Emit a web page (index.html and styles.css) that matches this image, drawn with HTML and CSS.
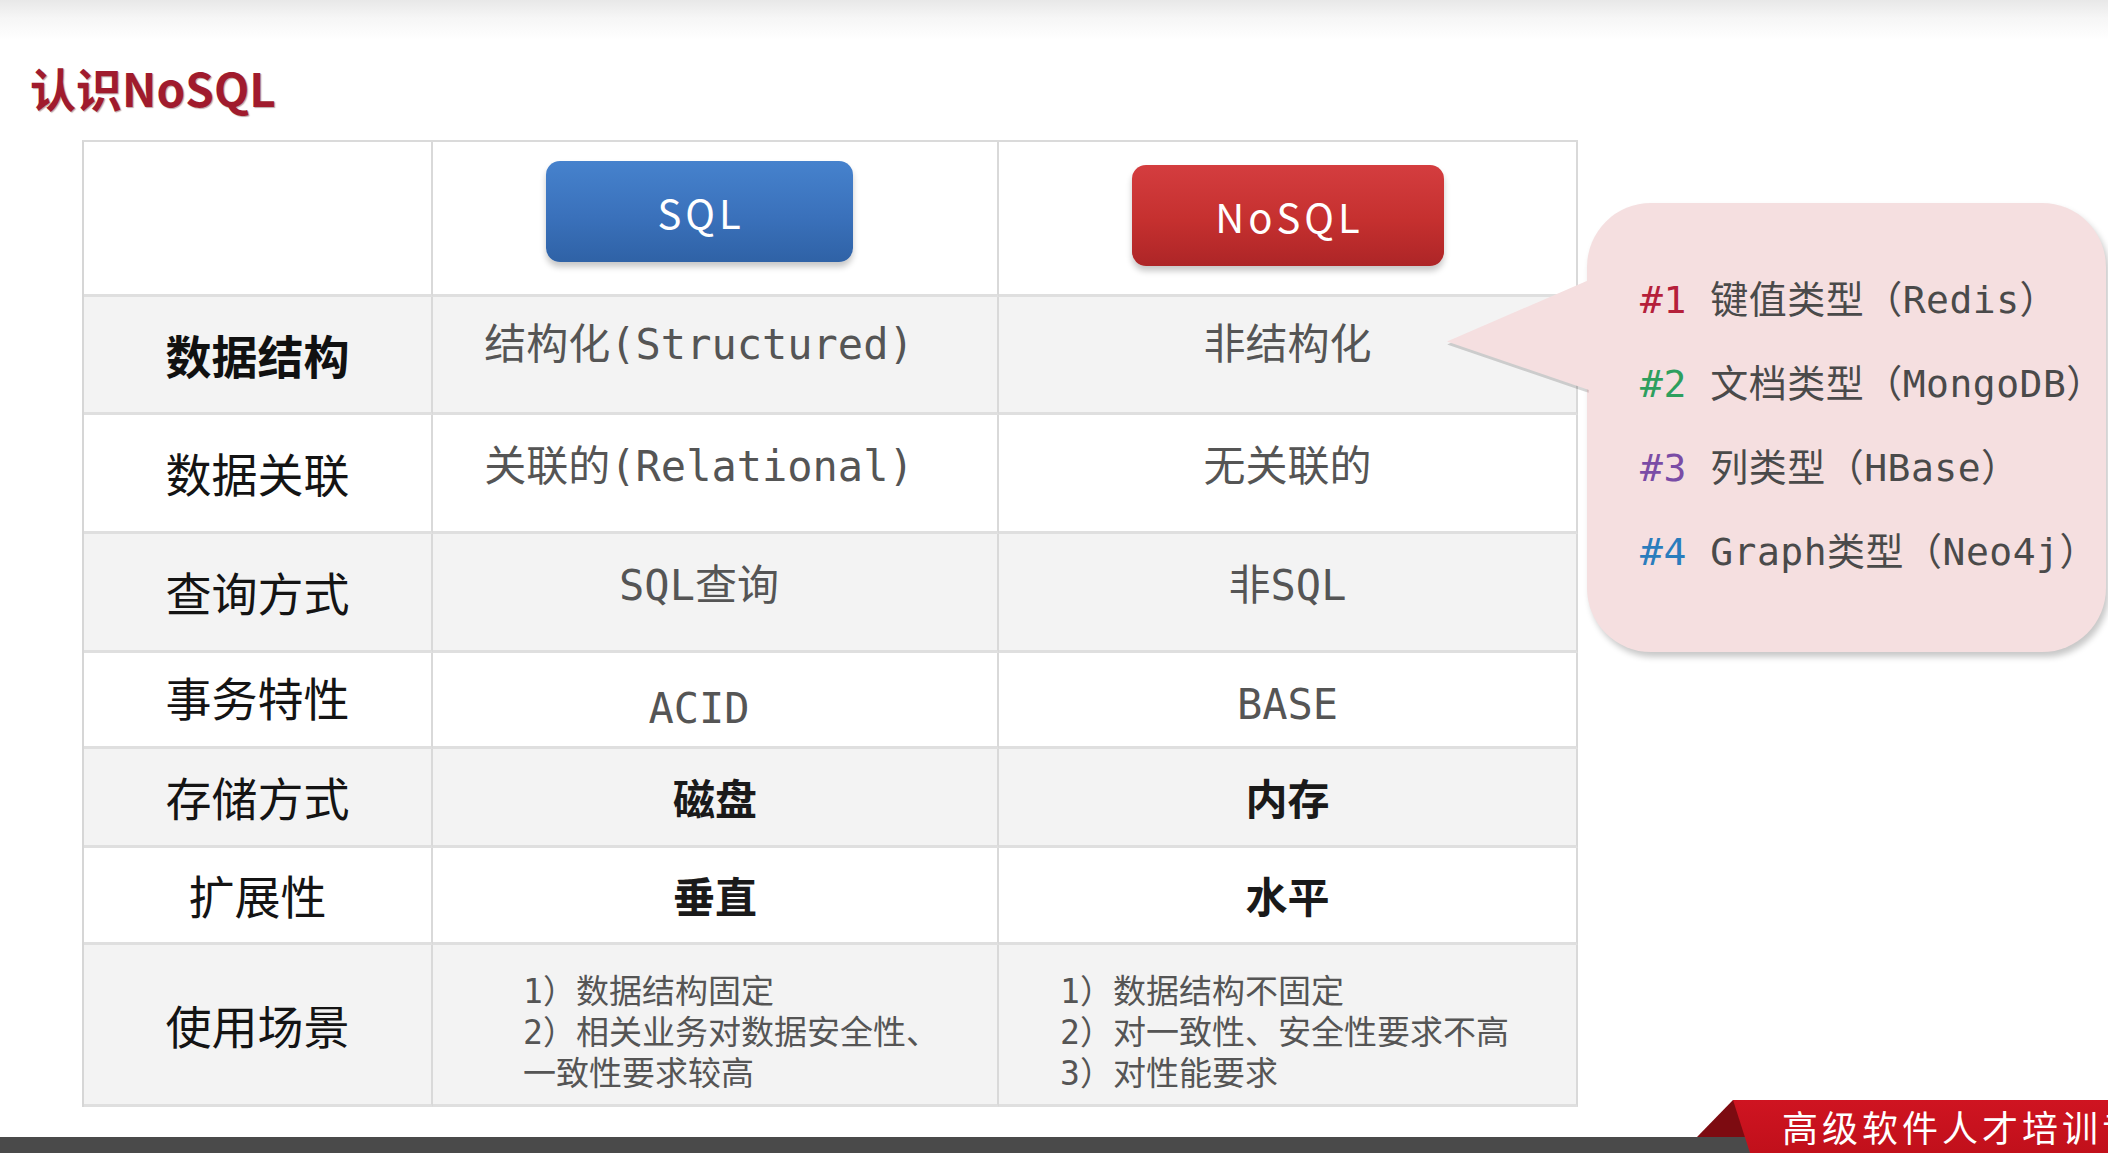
FILE: index.html
```html
<!DOCTYPE html>
<html lang="zh-CN">
<head>
<meta charset="utf-8">
<title>认识NoSQL</title>
<link rel="stylesheet" href="styles.css">
</head>
<body>
<div class="slide">
  <h1 class="title">认识NoSQL</h1>
  <div class="content">
    <div class="compare">
      <div class="cell head"></div>
      <div class="cell head head-sql"><span class="btn btn-sql">SQL</span></div>
      <div class="cell head head-nosql"><span class="btn btn-nosql">NoSQL</span></div>

      <div class="cell gray label strong">数据结构</div>
      <div class="cell gray val sql-col up9">结构化(Structured)</div>
      <div class="cell gray val up9">非结构化</div>

      <div class="cell label">数据关联</div>
      <div class="cell val sql-col up6">关联的(Relational)</div>
      <div class="cell val up6">无关联的</div>

      <div class="cell gray label">查询方式</div>
      <div class="cell gray val sql-col up6">SQL查询</div>
      <div class="cell gray val up6">非SQL</div>

      <div class="cell label up3">事务特性</div>
      <div class="cell val sql-col down10">ACID</div>
      <div class="cell val down6">BASE</div>

      <div class="cell gray label">存储方式</div>
      <div class="cell gray bold">磁盘</div>
      <div class="cell gray bold">内存</div>

      <div class="cell label">扩展性</div>
      <div class="cell bold">垂直</div>
      <div class="cell bold">水平</div>

      <div class="cell gray label">使用场景</div>
      <div class="cell gray use-left">
        <div class="uses">
          <div>1）数据结构固定</div>
          <div>2）相关业务对数据安全性、</div>
          <div>一致性要求较高</div>
        </div>
      </div>
      <div class="cell gray use-right">
        <div class="uses">
          <div>1）数据结构不固定</div>
          <div>2）对一致性、安全性要求不高</div>
          <div>3）对性能要求</div>
        </div>
      </div>
    </div>

    <div class="bubble">
      <div class="item"><span class="n1">#1</span> 键值类型（Redis）</div>
      <div class="item"><span class="n2">#2</span> 文档类型（MongoDB）</div>
      <div class="item"><span class="n3">#3</span> 列类型（HBase）</div>
      <div class="item"><span class="n4">#4</span> Graph类型（Neo4j）</div>
    </div>
  </div>

  <footer class="footer">
    <div class="bar"></div>
    <div class="ribbon">
      <div class="fold"></div>
      <div class="band">高级软件人才培训专家</div>
    </div>
  </footer>
</div>
</body>
</html>
```
FILE: styles.css
```css
* { box-sizing: border-box; }

html, body {
  margin: 0;
  padding: 0;
}

body {
  width: 2108px;
  height: 1153px;
  overflow: hidden;
  background: linear-gradient(#e8e8e8 0, #f6f6f6 18px, #ffffff 40px);
  font-family: "Noto Sans CJK SC", "Noto Sans", sans-serif;
}

.slide {
  padding-top: 64px;
}

.title {
  margin: 0 0 0 30px;
  font-size: 46px;
  line-height: 46px;
  font-weight: 700;
  color: #a01b2d;
  text-shadow: 1px 1px 1px rgba(70, 0, 0, 0.35);
}

.content {
  position: relative;
  margin-top: 30px;
}

/* comparison table */
.compare {
  display: grid;
  width: 1496px;
  margin-left: 82px;
  grid-template-columns: 349px 566px 579px;
  grid-template-rows: 155px 118px 119px 119px 96px 99px 97px 162px;
  border-top: 2px solid #dadada;
  border-left: 2px solid #d6d6d6;
}

.cell {
  display: flex;
  align-items: center;
  justify-content: center;
  background: #ffffff;
  border-right: 2px solid #d9d9d9;
  border-bottom: 3px solid #dfdfdf;
  line-height: 1.2;
}

.gray { background: #f3f3f3; }

.label {
  font-size: 46px;
  font-weight: 400;
  color: #141414;
}

.label.strong { font-weight: 700; color: #111; }

.val {
  font-family: "DejaVu Sans Mono", "Noto Sans CJK SC", monospace;
  font-size: 42px;
  color: #555555;
}

.sql-col { padding-right: 32px; }

.bold {
  font-size: 42px;
  font-weight: 700;
  color: #1a1a1a;
}

.up9 { padding-bottom: 18px; }
.up6 { padding-bottom: 12px; }
.up3 { padding-bottom: 6px; }
.down10 { padding-top: 20px; }
.down6 { padding-top: 12px; }

.uses {
  font-family: "DejaVu Sans Mono", "Noto Sans CJK SC", monospace;
  font-size: 33px;
  line-height: 41px;
  color: #555555;
  text-align: left;
  white-space: nowrap;
}

.use-left { padding-left: 32px; padding-top: 16px; }
.use-right { padding-right: 6px; padding-top: 16px; }

/* header buttons */
.head { align-items: flex-start; }
.head-sql { padding-top: 19px; padding-right: 32px; }
.head-nosql { padding-top: 23px; }

.btn {
  display: flex;
  align-items: center;
  justify-content: center;
  height: 101px;
  border-radius: 14px;
  color: #ffffff;
  font-size: 40px;
  letter-spacing: 4px;
  padding-left: 4px;
  box-shadow: 0 5px 6px rgba(0, 0, 0, 0.22);
}

.btn-sql {
  width: 307px;
  background: linear-gradient(#4682cd, #3a71bb 55%, #2f62a6);
}

.btn-nosql {
  width: 312px;
  background: linear-gradient(#d43d3f, #c5302f 55%, #ad2527);
}

/* callout bubble */
.bubble {
  position: absolute;
  left: 1587px;
  top: 63px;
  width: 519px;
  height: 449px;
  padding: 55px 0 0 53px;
  background: #f5dfe0;
  border-radius: 64px;
  box-shadow: 3px 5px 6px rgba(0, 0, 0, 0.22);
  font-family: "DejaVu Sans Mono", "Noto Sans CJK SC", monospace;
  font-size: 38px;
  letter-spacing: 0.5px;
  color: #4a4a4a;
}

.bubble::before,
.bubble::after {
  content: "";
  position: absolute;
  left: -140px;
  top: 77px;
  width: 142px;
  height: 110px;
  clip-path: polygon(100% 0, 0 56%, 100% 100%);
}

.bubble::before {
  top: 80px;
  background: rgba(0, 0, 0, 0.16);
  filter: blur(1px);
}

.bubble::after {
  background: #f5dfe0;
}

.item {
  line-height: 84px;
  white-space: nowrap;
}

.n1 { color: #b5203a; }
.n2 { color: #2e9f5e; }
.n3 { color: #7a4ca6; }
.n4 { color: #2a7dbd; }

/* footer */
.footer {
  display: flex;
  height: 53px;
  margin-top: -7px;
}

.bar {
  flex: 1;
  align-self: flex-end;
  height: 16px;
  background: #4a4a4a;
}

.ribbon {
  flex: none;
  width: 411px;
  display: flex;
  background: linear-gradient(to top, #4a4a4a 16px, transparent 16px) no-repeat;
  background-size: 60px 100%;
}

.fold {
  flex: none;
  width: 50px;
  height: 37px;
  background: #7d0b11;
  clip-path: polygon(0 100%, 36px 0, 50px 0, 50px 100%);
}

.band {
  flex: none;
  width: 375px;
  margin-left: -14px;
  padding-left: 49px;
  background: linear-gradient(#cf1421, #c1101b);
  clip-path: polygon(0 0, 100% 0, 100% 100%, 17px 100%);
  color: #ffffff;
  font-size: 36px;
  line-height: 53px;
  letter-spacing: 4px;
  white-space: nowrap;
  overflow: hidden;
}
```
